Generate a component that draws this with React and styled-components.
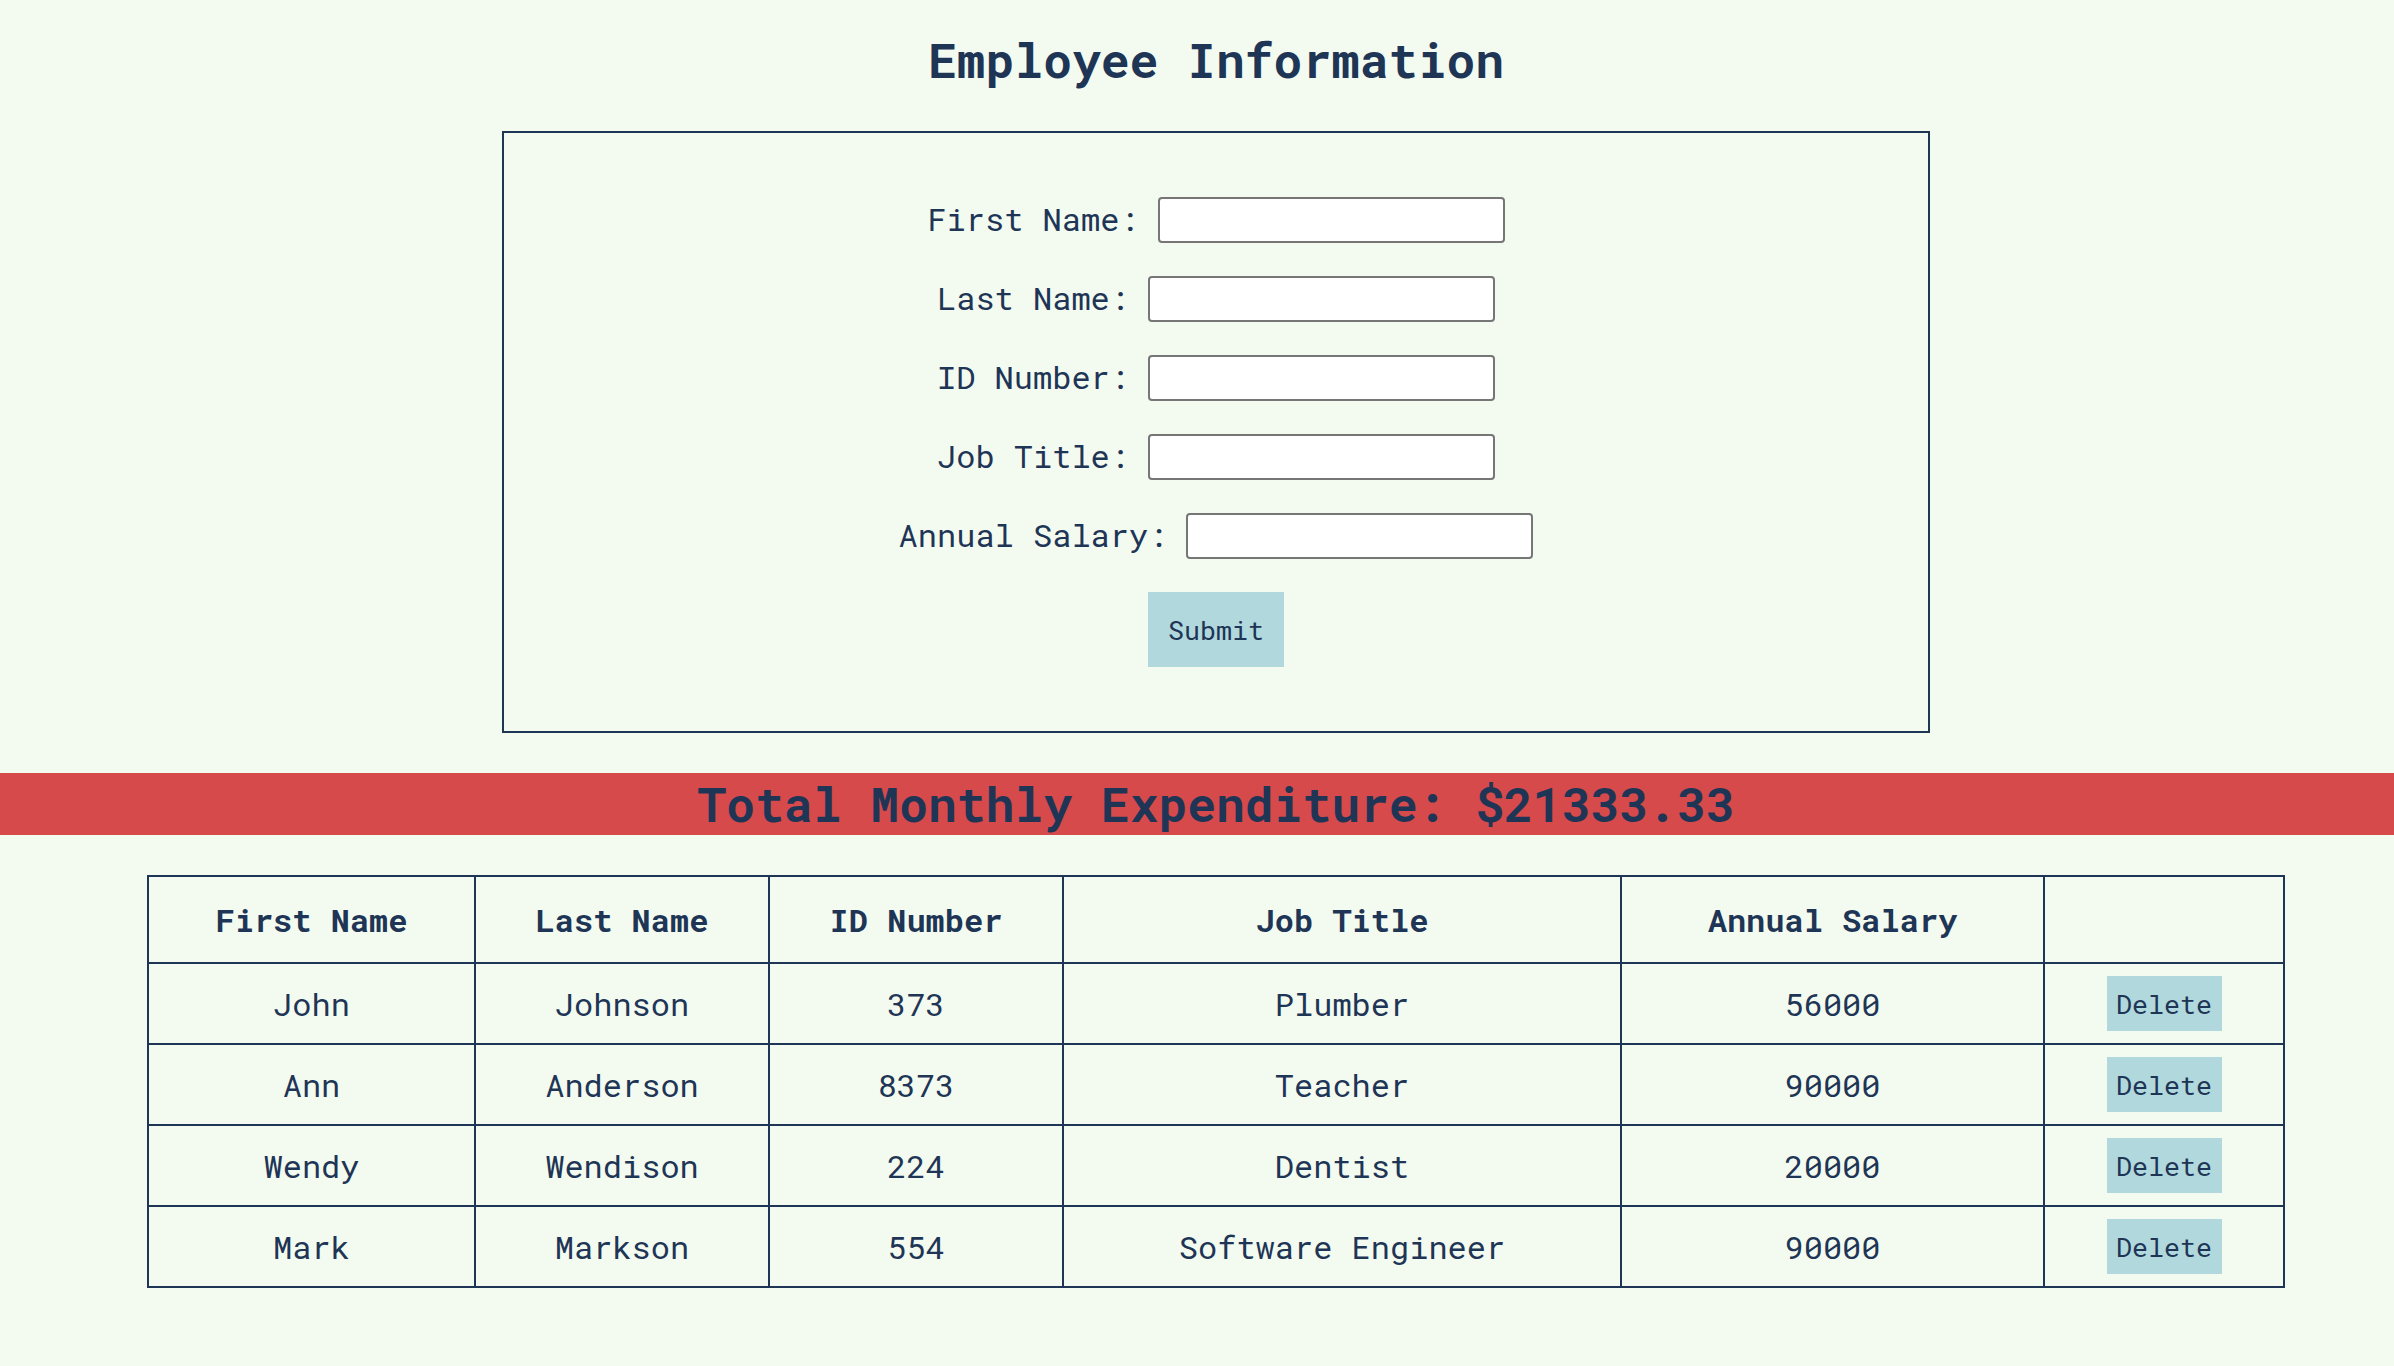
import React from "react";
import styled, { createGlobalStyle } from "styled-components";

const navy = "#1f3556";

const GlobalStyle = createGlobalStyle`
  html, body {
    margin: 0;
    padding: 0;
    background: #f3fbf0;
  }
  body {
    font-family: "Roboto Mono", "DejaVu Sans Mono", "Liberation Mono", monospace;
    color: ${navy};
  }
`;

const Page = styled.div`
  display: flex;
  flex-direction: column;
  align-items: stretch;
  padding-bottom: 60px;
`;

const Section = styled.section`
  display: flex;
  flex-direction: column;
  align-items: center;
  padding-left: 38px;
`;

const Title = styled.h2`
  margin: 31px 0 42px;
  font-size: 48px;
  line-height: 58px;
  font-weight: 700;
`;

const FormBox = styled.form`
  box-sizing: border-box;
  width: 1428px;
  border: 2px solid ${navy};
  padding: 64px 0;
  display: flex;
  flex-direction: column;
  align-items: center;
  gap: 33px;
`;

const Field = styled.div`
  display: flex;
  align-items: center;
  gap: 19px;
  height: 46px;
`;

const Label = styled.label`
  font-size: 32px;
  line-height: 44px;
  padding-bottom: 2px;
  white-space: pre;
`;

const Input = styled.input`
  box-sizing: border-box;
  width: 347px;
  height: 46px;
  border: 2px solid #767676;
  border-radius: 4px;
  background: #fff;
  padding: 2px 4px;
  font-size: 26px;
`;

const Button = styled.button`
  box-sizing: border-box;
  border: none;
  background: #b1d9dd;
  color: ${navy};
  font-family: inherit;
  font-size: 26.67px;
  padding: 0;
  width: ${(p) => p.$w}px;
  height: ${(p) => p.$h}px;
  cursor: pointer;
`;

const Banner = styled.div`
  margin-top: 40px;
  background: #d64a4c;
  height: 62px;
  display: flex;
  justify-content: center;
  align-items: center;
  padding-left: 38px;
  font-size: 48px;
  font-weight: 700;
  line-height: 62px;
`;

const Table = styled.table`
  margin-top: 40px;
  width: 2136px;
  table-layout: fixed;
  border-collapse: collapse;
  border: 2px solid ${navy};
  font-size: 32px;
`;

const Th = styled.th`
  border: 2px solid ${navy};
  height: 85px;
  padding: 0;
  font-weight: 700;
  text-align: center;
`;

const Td = styled.td`
  border: 2px solid ${navy};
  height: 79px;
  padding: 0;
  text-align: center;
`;

const fields = ["First Name", "Last Name", "ID Number", "Job Title", "Annual Salary"];
const widths = [327, 294, 294, 558, 423, 240];

const employees = [
  ["John", "Johnson", "373", "Plumber", "56000"],
  ["Ann", "Anderson", "8373", "Teacher", "90000"],
  ["Wendy", "Wendison", "224", "Dentist", "20000"],
  ["Mark", "Markson", "554", "Software Engineer", "90000"],
];

export default function App() {
  return (
    <Page>
      <GlobalStyle />
      <Section>
        <Title>Employee Information</Title>
        <FormBox onSubmit={(e) => e.preventDefault()}>
          {fields.map((f) => (
            <Field key={f}>
              <Label>{f}:</Label>
              <Input type="text" />
            </Field>
          ))}
          <Button type="submit" $w={136} $h={75}>
            Submit
          </Button>
        </FormBox>
      </Section>
      <Banner>Total Monthly Expenditure: $21333.33</Banner>
      <Section>
        <Table>
          <colgroup>
            {widths.map((w, i) => (
              <col key={i} style={{ width: w }} />
            ))}
          </colgroup>
          <thead>
            <tr>
              {fields.map((f) => (
                <Th key={f}>{f}</Th>
              ))}
              <Th />
            </tr>
          </thead>
          <tbody>
            {employees.map((row) => (
              <tr key={row[2]}>
                {row.map((c, i) => (
                  <Td key={i}>{c}</Td>
                ))}
                <Td>
                  <Button type="button" $w={115} $h={55}>
                    Delete
                  </Button>
                </Td>
              </tr>
            ))}
          </tbody>
        </Table>
      </Section>
    </Page>
  );
}
